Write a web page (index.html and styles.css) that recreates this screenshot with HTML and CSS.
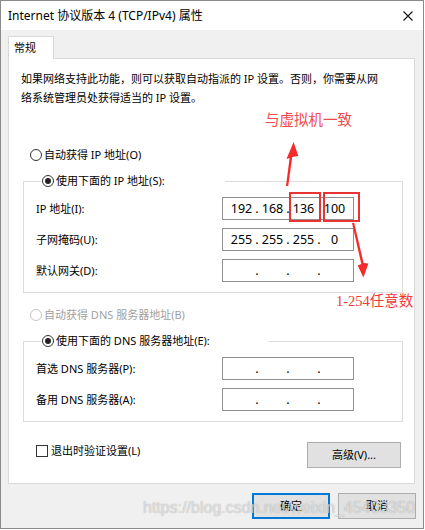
FILE: index.html
```html
<!DOCTYPE html>
<html lang="zh-CN">
<head>
<meta charset="utf-8">
<title>Internet 协议版本 4 (TCP/IPv4) 属性</title>
<link rel="stylesheet" href="styles.css">
</head>
<body>
<div class="window">
  <div class="titlebar">
    <span class="title">Internet 协议版本 4 (TCP/IPv4) 属性</span>
    <svg class="close" width="10" height="10" viewBox="0 0 10 10"><path d="M0.5 0.5L9.5 9.5M9.5 0.5L0.5 9.5" stroke="#111" stroke-width="1.1" fill="none"/></svg>
  </div>
  <div class="body">
    <div class="tab">常规</div>
    <div class="panel">
      <p class="intro">如果网络支持此功能，则可以获取自动指派的 IP 设置。否则，你需要从网<br>络系统管理员处获得适当的 IP 设置。</p>

      <div class="radio-row gap-lg"><span class="radio"></span><span>自动获得 IP 地址(O)</span></div>

      <fieldset class="group">
        <legend class="legend legend-ip"><span class="radio checked"></span>使用下面的 IP 地址(S):</legend>
        <div class="fields">
          <span class="label">IP 地址(I):</span>
          <div class="ipbox"><span class="oct">192</span><span class="dot">.</span><span class="oct">168</span><span class="dot">.</span><span class="oct">136</span><span class="dot"></span><span class="oct">100</span></div>
          <span class="label">子网掩码(U):</span>
          <div class="ipbox"><span class="oct">255</span><span class="dot">.</span><span class="oct">255</span><span class="dot">.</span><span class="oct">255</span><span class="dot">.</span><span class="oct">0</span></div>
          <span class="label">默认网关(D):</span>
          <div class="ipbox"><span class="oct"></span><span class="dot">.</span><span class="oct"></span><span class="dot">.</span><span class="oct"></span><span class="dot">.</span><span class="oct"></span></div>
        </div>
      </fieldset>

      <div class="radio-row disabled gap-md"><span class="radio"></span><span>自动获得 DNS 服务器地址(B)</span></div>

      <fieldset class="group">
        <legend class="legend legend-dns"><span class="radio checked"></span>使用下面的 DNS 服务器地址(E):</legend>
        <div class="fields">
          <span class="label">首选 DNS 服务器(P):</span>
          <div class="ipbox"><span class="oct"></span><span class="dot">.</span><span class="oct"></span><span class="dot">.</span><span class="oct"></span><span class="dot">.</span><span class="oct"></span></div>
          <span class="label">备用 DNS 服务器(A):</span>
          <div class="ipbox"><span class="oct"></span><span class="dot">.</span><span class="oct"></span><span class="dot">.</span><span class="oct"></span><span class="dot">.</span><span class="oct"></span></div>
        </div>
      </fieldset>

      <div class="bottom-row">
        <div class="check-row"><span class="checkbox"></span><span>退出时验证设置(L)</span></div>
        <button class="btn btn-adv">高级(V)...</button>
      </div>
    </div>
    <div class="footer">
      <button class="btn btn-default">确定</button>
      <button class="btn">取消</button>
    </div>
  </div>

  <div class="note note-top">与虚拟机一致</div>
  <div class="note note-side">1-254任意数</div>
  <div class="redbox redbox-a"></div>
  <div class="redbox redbox-b"></div>
  <svg class="arrows" width="425" height="530" viewBox="0 0 425 530">
    <polygon points="286,186 289.6,158 286.5,159 293.6,142 298.3,156 292.2,157 288.2,186" fill="#f52a2a"/>
    <polygon points="352,223 354.2,223 363.6,263 368.4,263.5 363.4,277.5 357.8,265.5 361.3,264" fill="#f52a2a"/>
  </svg>
  <div class="watermark">https://blog.csdn.net/weixin_45403350</div>
</div>
</body>
</html>
```

FILE: styles.css
```css
* { box-sizing: border-box; }

html, body {
  margin: 0;
  padding: 0;
  background: #ffffff;
}

body {
  font-family: "Noto Sans", "Noto Sans CJK SC", sans-serif;
  font-size: 11px;
  color: #000;
}

.window {
  position: relative;
  width: 424px;
  height: 529px;
  border: 1px solid #8a8a8a;
  display: flex;
  flex-direction: column;
  background: #f0f0f0;
}

.titlebar {
  height: 29px;
  flex: none;
  background: #ffffff;
  display: flex;
  align-items: center;
  justify-content: space-between;
  padding: 0 10px 0 7px;
}

.title {
  font-size: 12px;
  line-height: 16px;
  color: #000;
}

.close { display: block; }

.body {
  flex: 1;
  display: flex;
  flex-direction: column;
  align-items: flex-start;
  padding: 6px 8px 0 7px;
}

.tab {
  position: relative;
  z-index: 1;
  width: 46px;
  height: 23px;
  margin-bottom: -1px;
  padding-left: 5px;
  line-height: 22px;
  background: #ffffff;
  border: 1px solid #d9d9d9;
  border-bottom: none;
}

.panel {
  align-self: stretch;
  background: #ffffff;
  border: 1px solid #d9d9d9;
  padding: 10px 0 15px 0;
}

.intro {
  margin: 0 0 0 12px;
  line-height: 19px;
}

.radio-row {
  display: flex;
  align-items: center;
  height: 18px;
  line-height: 18px;
  padding-left: 21px;
}

.gap-lg { margin-top: 39px; }
.gap-md { margin-top: 13px; }

.radio {
  display: inline-block;
  width: 12px;
  height: 12px;
  border: 1px solid #333;
  border-radius: 50%;
  background: #fff;
  margin-right: 2px;
  position: relative;
  vertical-align: -2px;
  flex: none;
}

.radio.checked::after {
  content: "";
  position: absolute;
  left: 2px;
  top: 2px;
  width: 6px;
  height: 6px;
  border-radius: 50%;
  background: #222;
}

.disabled { color: #a0a0a0; }
.disabled .radio { border-color: #c4c4c4; }

.group {
  margin: 8px 11px 0 14px;
  padding: 7px 0 10px 12px;
  border: 1px solid #dcdcdc;
  min-width: 0;
}

.legend {
  margin-left: 5px;
  padding: 0 0 0 1px;
  height: 18px;
  line-height: 18px;
  white-space: nowrap;
}

.legend-ip { width: 184px; }
.legend-dns { width: 228px; }

.fields {
  display: grid;
  grid-template-columns: 186px 132px;
  row-gap: 8px;
  align-items: center;
}

.label { line-height: 18px; }

.ipbox {
  height: 23px;
  border: 1px solid #8f8f8f;
  background: #fff;
  display: flex;
  align-items: center;
  padding-left: 7px;
  font-family: "Noto Sans", sans-serif;
  font-size: 12.5px;
  line-height: 16px;
}

.oct {
  width: 23px;
  text-align: center;
}

.dot {
  width: 8px;
  text-align: center;
}

.bottom-row {
  margin-top: 20px;
  display: flex;
  justify-content: space-between;
  align-items: flex-start;
  padding: 0 13px 0 27px;
}

.check-row {
  display: flex;
  align-items: center;
  height: 18px;
  line-height: 18px;
}

.checkbox {
  width: 12px;
  height: 12px;
  border: 1px solid #333;
  background: #fff;
  margin-right: 3px;
}

.btn {
  font-family: "Noto Sans", "Noto Sans CJK SC", sans-serif;
  font-size: 11px;
  color: #000;
  background: #e1e1e1;
  border: 1px solid #adadad;
  width: 78px;
  height: 26px;
  padding: 0;
  margin: 0;
  line-height: 18px;
}

.btn-adv { width: 94px; }

.btn-default {
  border-color: #0078d7;
  box-shadow: inset 0 0 0 1px #0078d7;
}

.footer {
  align-self: stretch;
  margin-top: 9px;
  margin-right: -1px;
  display: flex;
  justify-content: flex-end;
  gap: 8px;
}

.note {
  position: absolute;
  color: #ef3a3a;
  white-space: nowrap;
  line-height: 18px;
}

.note-top {
  left: 264px;
  top: 109px;
  font-family: "Noto Sans CJK SC", sans-serif;
  font-size: 14.5px;
  color: #f24b4b;
}

.note-side {
  left: 335px;
  top: 291px;
  font-family: "Liberation Serif", "Noto Sans CJK SC", serif;
  font-size: 14.5px;
}

.redbox {
  position: absolute;
  border: 2px solid #e93434;
  top: 191px;
  height: 30px;
}

.redbox-a { left: 288px; width: 32px; }
.redbox-b { left: 322px; width: 37px; }

.arrows {
  position: absolute;
  left: -1px;
  top: -1px;
  pointer-events: none;
}

.watermark {
  position: absolute;
  left: 142px;
  top: 497px;
  font-family: "Liberation Sans", sans-serif;
  font-size: 16px;
  line-height: 20px;
  color: rgba(255, 255, 255, 0.6);
  text-shadow: 0 0 1px rgba(90, 90, 90, 0.55);
  white-space: nowrap;
  pointer-events: none;
}
```
